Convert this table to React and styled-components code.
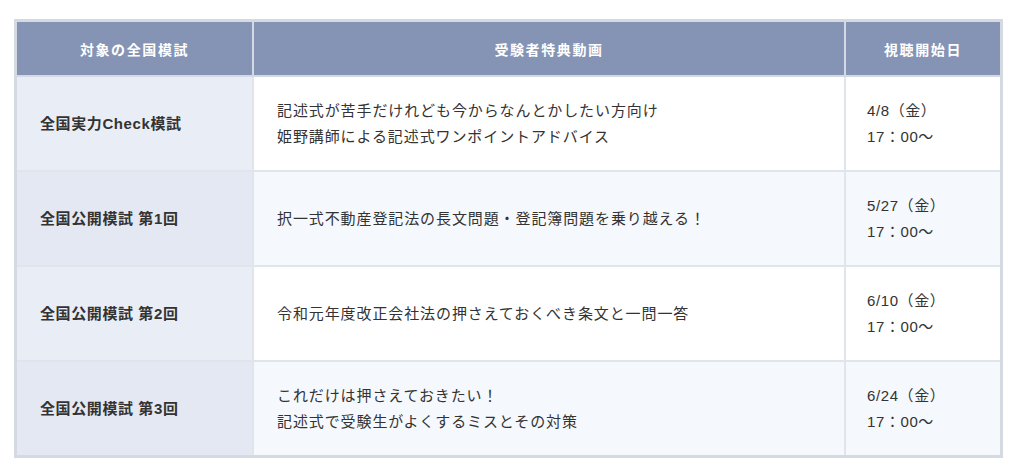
import styled, { createGlobalStyle } from 'styled-components'

const GlobalStyle = createGlobalStyle`
  body {
    margin: 0;
    background: #fff;
    font-family: "Liberation Sans", "Noto Sans CJK JP", sans-serif;
    color: #333;
  }
`

const rows = [
  {
    exam: '全国実力Check模試',
    video: ['記述式が苦手だけれども今からなんとかしたい方向け', '姫野講師による記述式ワンポイントアドバイス'],
    date: '4/8（金）',
  },
  {
    exam: '全国公開模試 第1回',
    video: ['択一式不動産登記法の長文問題・登記簿問題を乗り越える！'],
    date: '5/27（金）',
  },
  {
    exam: '全国公開模試 第2回',
    video: ['令和元年度改正会社法の押さえておくべき条文と一問一答'],
    date: '6/10（金）',
  },
  {
    exam: '全国公開模試 第3回',
    video: ['これだけは押さえておきたい！', '記述式で受験生がよくするミスとその対策'],
    date: '6/24（金）',
  },
]

export default function App() {
  return (
    <Page>
      <GlobalStyle />
      <Table>
        <colgroup>
          <col style={{ width: 237 }} />
          <col style={{ width: 592 }} />
          <col />
        </colgroup>
        <thead>
          <tr>
            <Head>対象の全国模試</Head>
            <Head>受験者特典動画</Head>
            <Head $last>視聴開始日</Head>
          </tr>
        </thead>
        <tbody>
          {rows.map((r, i) => (
            <Row key={r.exam} $last={i === rows.length - 1}>
              <ExamCell $alt={i % 2 === 1}>{r.exam}</ExamCell>
              <Cell $alt={i % 2 === 1}>
                {r.video.map(line => (
                  <div key={line}>{line}</div>
                ))}
              </Cell>
              <DateCell $alt={i % 2 === 1} $last>
                <div>{r.date}</div>
                <div>17：00～</div>
              </DateCell>
            </Row>
          ))}
        </tbody>
      </Table>
    </Page>
  )
}

const Page = styled.div`
  padding: 19px 14px;
`

const Table = styled.table`
  width: 989px;
  table-layout: fixed;
  border-collapse: separate;
  border-spacing: 0;
  border: 3px solid #d5d9e1;
`

const Head = styled.th`
  height: 53px;
  padding: 0;
  background: #8594b5;
  color: #fff;
  font-size: 14px;
  font-weight: bold;
  letter-spacing: 1.6px;
  text-align: center;
  border-right: ${p => (p.$last ? 'none' : '2px solid #d5d9e1')};
  border-bottom: 2px solid #d5d9e1;
`

const Row = styled.tr`
  & > td {
    border-bottom: ${p => (p.$last ? 'none' : '2px solid #e0e4eb')};
  }
`

const Cell = styled.td`
  height: 93px;
  padding: 0 22px 0 23px;
  background: ${p => (p.$alt ? '#f5f8fc' : '#fff')};
  font-size: 15px;
  letter-spacing: 0.9px;
  line-height: 26px;
  vertical-align: middle;
  border-right: ${p => (p.$last ? 'none' : '2px solid #e0e4eb')};
`

const ExamCell = styled(Cell)`
  background: ${p => (p.$alt ? '#e4e8f2' : '#e9edf6')};
  font-weight: bold;
  letter-spacing: 0.6px;
`

const DateCell = styled(Cell)`
  padding-left: 21px;
  letter-spacing: 0.6px;
`
